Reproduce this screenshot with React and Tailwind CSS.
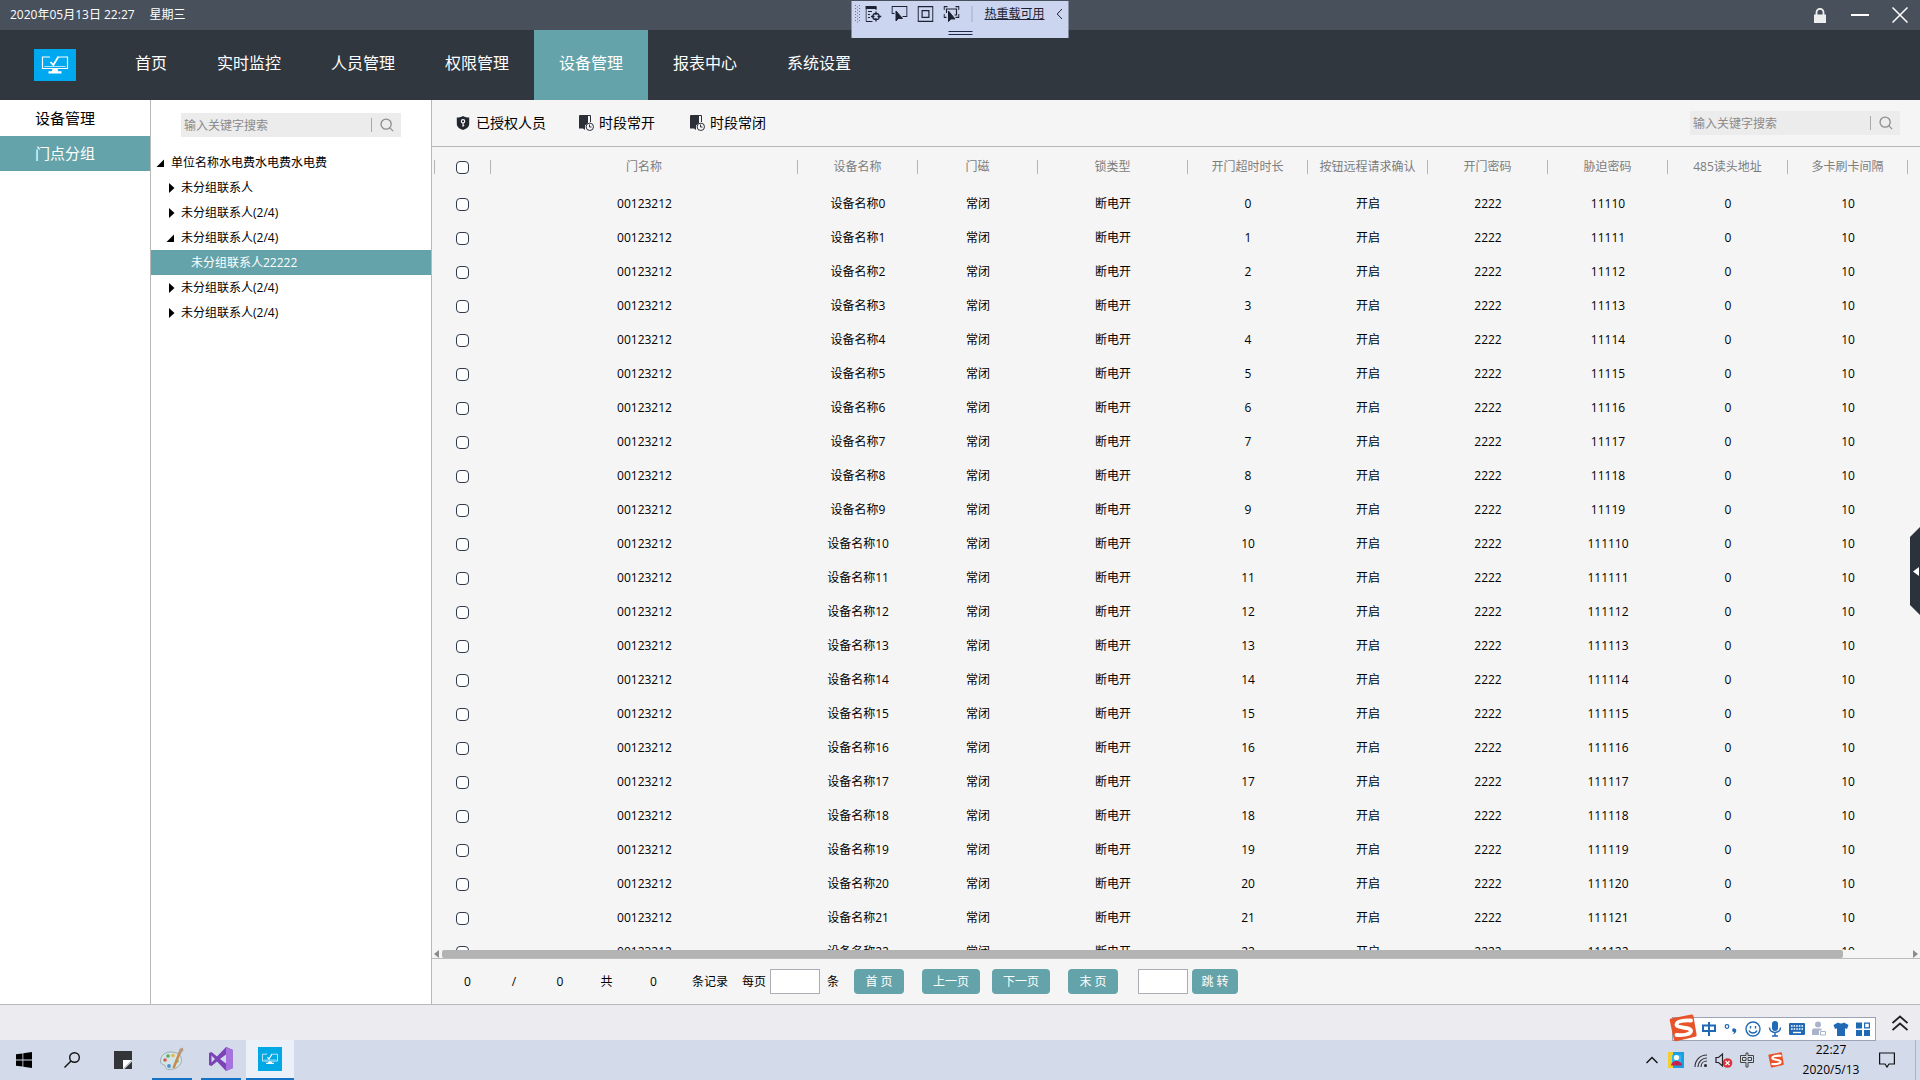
import { useState } from 'react';
import clsx from 'clsx';

const NAV = ['首页', '实时监控', '人员管理', '权限管理', '设备管理', '报表中心', '系统设置'];

const TREE = [
  { label: '单位名称水电费水电费水电费', level: 0, open: true },
  { label: '未分组联系人', level: 1 },
  { label: '未分组联系人(2/4)', level: 1 },
  { label: '未分组联系人(2/4)', level: 1, open: true },
  { label: '未分组联系人22222', level: 2 },
  { label: '未分组联系人(2/4)', level: 1 },
  { label: '未分组联系人(2/4)', level: 1 },
];

const COLUMNS = [
  { title: '门名称', width: '' },
  { title: '设备名称', width: 'w-[120px]' },
  { title: '门磁', width: 'w-[120px]' },
  { title: '锁类型', width: 'w-[150px]' },
  { title: '开门超时时长', width: 'w-[120px]' },
  { title: '按钮远程请求确认', width: 'w-[120px]' },
  { title: '开门密码', width: 'w-[120px]' },
  { title: '胁迫密码', width: 'w-[120px]' },
  { title: '485读头地址', width: 'w-[120px]' },
  { title: '多卡刷卡间隔', width: 'w-[120px]' },
];

const ROWS = Array.from({ length: 23 }, (_, i) => [
  '00123212', `设备名称${i}`, '常闭', '断电开', `${i}`, '开启', '2222', `1111${i}`, '0', '10',
]);

function MonitorIcon({ className }) {
  return (
    <svg viewBox="0 0 28 20" className={className} fill="none" stroke="#fff">
      <path d="M9 2H1.5v11.5h25V2H18" strokeWidth="1.2" />
      <path d="M3.5 11.5h21" strokeWidth="1" opacity=".7" />
      <path d="M9.5 7l2.800 3L17.500 1.500" strokeWidth="1.800" />
      <path d="M11.500 14h5l.8 2.200h3.200v2.300h-13v-2.300h3.200z" fill="#fff" stroke="none" />
    </svg>
  );
}

function SearchIcon({ className }) {
  return (
    <svg viewBox="0 0 16 16" className={className} fill="none" stroke="#8d8d8d" strokeWidth="1.500">
      <circle cx="7" cy="7" r="5.800" />
      <path d="M11 11l4 4" />
    </svg>
  );
}

function ShieldIcon() {
  return (
    <svg viewBox="0 0 14 14" className="size-3.5">
      <path d="M7 0c2 1.200 4 1.600 6.200 1.600V8c0 3-3 5-6.200 6C3.800 13 .8 11 .8 8V1.600C3 1.600 5 1.200 7 0z" fill="#23282f" />
      <circle cx="7" cy="5.300" r="1.700" fill="none" stroke="#fff" strokeWidth="1.100" />
      <path d="M7 7v3.800M7 9.300h1.300" stroke="#fff" strokeWidth="1.100" />
    </svg>
  );
}

function DoorClockIcon() {
  return (
    <svg viewBox="0 0 16 16" className="size-4">
      <path d="M1.500 13V.5h11V7" fill="none" stroke="#2b3038" />
      <path d="M1 1h9v7l-3 2.500V15l-2-1.500H1z" fill="#2b3038" />
      <circle cx="11.800" cy="11.800" r="3.700" fill="#f5f5f5" stroke="#2b3038" />
      <path d="M11.500 9.500V12h2" fill="none" stroke="#2b3038" />
    </svg>
  );
}

function SogouIcon({ className }) {
  return (
    <svg viewBox="0 0 28 28" className={className}>
      <path d="M2 4.500L22.500.5q1.500-.2 1.900 1.300l3.200 19q.2 1.700-1.400 2L7 27.300q-1.700.3-2.100-1.400L.7 6.300Q.4 4.900 2 4.500z" fill="#e8542a" />
      <path d="M22 6.500C16 6 7.500 7 7.500 10.500c0 4 14.500 2 14.500 6.500 0 3.500-8 4.500-14.500 4" fill="none" stroke="#fff" strokeWidth="3.800" strokeLinecap="round" />
    </svg>
  );
}

function SearchBox({ label, className }) {
  return (
    <div className={clsx('flex h-6 items-center bg-[#ececec]', className)}>
      <input
        type="text"
        aria-label={label}
        placeholder="输入关键字搜索"
        className="h-full min-w-0 flex-1 bg-transparent pl-[3px] text-xs outline-none placeholder:text-[#8a8a8a]"
      />
      <button aria-label="搜索" className="flex h-3.5 w-[30px] items-center justify-center border-l border-[#aaa]">
        <SearchIcon className="size-3.5" />
      </button>
    </div>
  );
}

function TitleBar() {
  return (
    <header className="flex h-[30px] shrink-0 items-center bg-[#48505b] pl-2.5 text-xs text-white">
      <span>2020年05月13日 22:27</span>
      <span className="ml-[15px]">星期三</span>
      <div className="ml-auto flex items-center">
        <button aria-label="锁定" className="flex w-10 justify-center">
          <svg viewBox="0 0 12 15" className="h-[15px] w-3">
            <path d="M2.500 7V4.300a3.500 3.500 0 017 0V7" fill="none" stroke="#eee" strokeWidth="1.800" />
            <path d="M0 6.500h12V15H0z" fill="#eee" />
          </svg>
        </button>
        <button aria-label="最小化" className="flex w-10 justify-center">
          <span className="h-0.5 w-[18px] bg-white" />
        </button>
        <button aria-label="关闭" className="flex w-10 justify-center">
          <svg viewBox="0 0 16 16" className="size-4" stroke="#fff" strokeWidth="1.500">
            <path d="M.5.5l15 15M15.500.5l-15 15" />
          </svg>
        </button>
      </div>
    </header>
  );
}

function DebugToolbar() {
  return (
    <div className="absolute top-px left-1/2 flex h-[37px] w-[217px] -translate-x-1/2 flex-col bg-[#ccd5f0] text-[#1c2233]">
      <div className="flex h-[26px] items-center pl-[3px]">
        <svg viewBox="0 0 6 18" className="mr-[5px] h-[18px] w-1.5">
          <path d="M1 0v18M5 0v18" stroke="#6b7594" strokeDasharray="1 2" />
          <path d="M3 1.500v16" stroke="#6b7594" strokeDasharray="1 2" />
        </svg>
        <button aria-label="实时可视化树" className="mr-2.5">
          <svg viewBox="0 0 16 16" className="size-4" fill="none" stroke="#1c2233">
            <path d="M.5 0v15.500H7" />
            <path d="M0 1.500h11" strokeWidth="3" />
            <path d="M10.500 1v3M2.500 5.500h4M2.500 8.500h2M2.500 11.500h2" />
            <circle cx="10.500" cy="10.500" r="3.200" strokeWidth="1.300" />
            <path d="M10.500 5.500v3.500M10.500 12v3.500M5.500 10.500H9M12 10.500h4" strokeWidth="1.300" />
          </svg>
        </button>
        <button aria-label="选择元素" className="mr-2.5">
          <svg viewBox="0 0 16 16" className="size-4" fill="none" stroke="#1c2233">
            <path d="M3 7.500H.5V.5h15v10H11" strokeWidth="1.200" />
            <path d="M4.500 5v10l2.500-2.600 4 .1z" fill="#1c2233" />
          </svg>
        </button>
        <button aria-label="显示布局" className="mr-2.5">
          <svg viewBox="0 0 16 16" className="size-4" fill="none" stroke="#1c2233" strokeWidth="1.200">
            <path d="M.6.600h14.800v14.800H.6zM4.600 4.600h6.800v6.800H4.600z" />
          </svg>
        </button>
        <button aria-label="跟踪焦点" className="mr-2.5">
          <svg viewBox="0 0 16 16" className="size-4" fill="none" stroke="#1c2233">
            <path d="M.6 4V.6H4M12 .6h3.400V4M15.400 8v3.400H12M.6 8v3.400H3M3 7V3h10v6h-2" strokeWidth="1.200" />
            <path d="M5 5v10.500l2.500-2.600 4 .1z" fill="#1c2233" />
          </svg>
        </button>
        <span className="mx-0.5 h-4 w-px bg-[#a3abc6]" />
        <a href="#reload" className="ml-2.5 text-xs underline">热重载可用</a>
        <button aria-label="折叠" className="ml-3">
          <svg viewBox="0 0 6 10" className="h-2.5 w-1.5" fill="none" stroke="#1c2233">
            <path d="M5.500 0L.7 5l4.800 5" />
          </svg>
        </button>
      </div>
      <div className="mx-auto mt-1 h-1 w-6 shrink-0 border-y border-[#1c2a4a]" />
    </div>
  );
}

function NavBar() {
  const [active, setActive] = useState(4);
  return (
    <nav className="flex h-[70px] shrink-0 bg-[#31373f] pl-[34px] text-base text-white">
      <div className="mt-[19px] mr-[34px] flex h-8 w-[42px] items-center justify-center bg-[#00a8ef]">
        <MonitorIcon className="h-5 w-7" />
      </div>
      {NAV.map((item, i) => (
        <button
          key={item}
          onClick={() => setActive(i)}
          className={clsx('px-[25px] pb-1', i === active && 'bg-[#65a3aa]')}
        >
          {item}
        </button>
      ))}
    </nav>
  );
}

function Tree() {
  const [selected, setSelected] = useState(4);
  return (
    <ul>
      {TREE.map((node, i) => (
        <li key={i}>
          <button
            onClick={() => setSelected(i)}
            className={clsx(
              'flex h-[25px] w-full items-center text-xs',
              node.level === 0 && 'pl-1.5',
              node.level === 1 && 'pl-4',
              node.level === 2 && 'pl-10',
              i === selected && 'bg-[#65a3aa] text-white',
            )}
          >
            {node.level < 2 && (
              <svg viewBox="0 0 8 10" className="mr-1.5 h-2.5 w-2 overflow-visible">
                <path d={node.open ? 'M7 1.500V9H-.5z' : 'M2 0l5.500 5L2 10z'} />
              </svg>
            )}
            {node.label}
          </button>
        </li>
      ))}
    </ul>
  );
}

const checkbox =
  'block size-[13px] mx-auto appearance-none rounded border border-[#2f3b4a] bg-white checked:bg-[#65a3aa]';

function DoorTable() {
  return (
    <div className="min-h-0 flex-1 overflow-hidden pr-3 pl-0.5">
      <table className="w-full table-fixed border-collapse text-center text-xs">
        <thead>
          <tr className="h-10 text-[#7d7d7d]">
            <th className="w-[57px] p-0 font-normal">
              <div className="flex h-3.5 items-center border-x border-[#b5b5b5]">
                <input type="checkbox" aria-label="全选" className={checkbox} />
              </div>
            </th>
            {COLUMNS.map((col) => (
              <th key={col.title} className={clsx('p-0 font-normal whitespace-nowrap', col.width)}>
                <div className="flex h-3.5 items-center justify-center border-r border-[#b5b5b5]">{col.title}</div>
              </th>
            ))}
          </tr>
        </thead>
        <tbody>
          {ROWS.map((row, i) => (
            <tr key={i} className="h-[34px]">
              <td className="p-0 pt-px">
                <input type="checkbox" aria-label={`选择${row[1]}`} className={checkbox} />
              </td>
              {row.map((cell, j) => (
                <td key={j} className="p-0">{cell}</td>
              ))}
            </tr>
          ))}
        </tbody>
      </table>
    </div>
  );
}

function ScrollBar() {
  return (
    <div className="flex h-[9px] shrink-0 items-center border-b border-[#b9bdbc] px-0.5">
      <svg viewBox="0 0 5 8" className="mr-[3px] h-2 w-[5px]"><path d="M5 0v8L0 4z" fill="#8c8c8c" /></svg>
      <div className="mr-[70px] h-2 flex-1 rounded-xs bg-[#b3b3b3]" />
      <svg viewBox="0 0 5 8" className="h-2 w-[5px]"><path d="M0 0v8l5-4z" fill="#8c8c8c" /></svg>
    </div>
  );
}

const pageButton = 'h-[25px] rounded-sm bg-[#65a3aa] text-white';
const pageInput = 'h-[25px] w-[50px] border border-[#abadb3] bg-white px-1 outline-none';

function Pager() {
  return (
    <footer className="flex h-[45px] shrink-0 items-center pl-3 text-xs">
      <span className="w-[47px] text-center">0</span>
      <span className="w-[46px] text-center">/</span>
      <span className="w-[46px] text-center">0</span>
      <span className="w-[47px] text-center">共</span>
      <span className="w-[47px] text-center">0</span>
      <span className="ml-[15px]">条记录</span>
      <label htmlFor="size" className="mr-1 ml-3.5">每页</label>
      <input id="size" type="text" className={pageInput} />
      <span className="mx-[7px]">条</span>
      <button className={clsx(pageButton, 'ml-2 w-[50px]')}>首 页</button>
      <button className={clsx(pageButton, 'ml-[18px] w-[58px]')}>上一页</button>
      <button className={clsx(pageButton, 'ml-3 w-[58px]')}>下一页</button>
      <button className={clsx(pageButton, 'ml-[18px] w-[50px]')}>末 页</button>
      <input type="text" aria-label="页码" className={clsx(pageInput, 'ml-5')} />
      <button className={clsx(pageButton, 'ml-1 w-[46px]')}>跳 转</button>
    </footer>
  );
}

function ImeBar() {
  return (
    <div className="absolute right-11 bottom-[39px] flex h-6 items-center border border-[#9ba3b5] bg-white pr-1 pl-6">
      <SogouIcon className="absolute -bottom-0.5 -left-1 size-7" />
      <div className="flex items-center gap-1.5 pl-1 text-[#1f69b5]">
        <svg viewBox="0 0 16 16" className="size-4" fill="none" stroke="currentColor" strokeWidth="2">
          <path d="M2 4.500h12v5.500H2zM8 1v14" />
        </svg>
        <svg viewBox="0 0 16 16" className="size-4" fill="none" stroke="currentColor">
          <circle cx="4" cy="5.500" r="1.800" strokeWidth="1.200" />
          <path d="M11.500 7.500a1.800 1.800 0 10-.5 3.500q0 1.200-1.500 2.500c2.500-.8 4-2.500 3.800-4.500a1.800 1.800 0 00-1.800-1.500z" fill="currentColor" stroke="none" />
        </svg>
        <svg viewBox="0 0 16 16" className="size-4" fill="none" stroke="currentColor" strokeWidth="1.400">
          <circle cx="8" cy="8" r="7" />
          <path d="M5.500 5v2.500M10.500 5v2.500M4 9.500c1.500 3.300 6.500 3.300 8 0" />
        </svg>
        <svg viewBox="0 0 16 16" className="size-4" fill="none" stroke="currentColor" strokeWidth="1.500">
          <rect x="5" y="0" width="6" height="10" rx="3" fill="currentColor" stroke="none" />
          <path d="M2.500 6.500c0 6.500 11 6.500 11 0M8 11.500v3.500M5 15h6" />
        </svg>
        <svg viewBox="0 0 16 16" className="size-4">
          <rect x="0" y="2" width="16" height="12" rx="1" fill="currentColor" />
          <path d="M2 5h12M2 8h12" stroke="#fff" strokeWidth="1.600" strokeDasharray="1.600 1" />
          <path d="M4 11.500h8" stroke="#fff" strokeWidth="1.400" />
        </svg>
        <svg viewBox="0 0 16 16" className="size-4" fill="#a9b4ca">
          <circle cx="7" cy="3.500" r="3" />
          <path d="M1 14V9.500q0-2 2-2h7.500v2H8V14z" />
          <path d="M9.500 10.500h5v3.500h-5z" fill="#fff" stroke="#a9b4ca" />
        </svg>
        <svg viewBox="0 0 16 16" className="size-4" fill="currentColor">
          <path d="M5 1.500q3 2 6 0L15.500 4 14 8l-2-.7V15H4V7.300L2 8 .5 4z" />
        </svg>
        <svg viewBox="0 0 16 16" className="size-4" fill="currentColor">
          <path d="M1 1.500h6v6H1zM1 9h6v6H1zM9 9h6v6H9z" />
          <path d="M9.600 2.100h4.800v4.800H9.600z" fill="#fff" stroke="currentColor" strokeWidth="1.200" />
        </svg>
      </div>
    </div>
  );
}

function TaskBar() {
  return (
    <div className="flex h-10 shrink-0 items-stretch bg-[#d3daea] text-xs text-black">
      <button aria-label="开始" className="flex w-12 items-center justify-center">
        <svg viewBox="0 0 16 16" className="size-4">
          <path d="M0 2.300l6.500-.9v6.200H0zM7.300 1.300L16 0v7.600H7.300zM0 8.400h6.500v6.200L0 13.700zM7.300 8.400H16V16l-8.700-1.300z" />
        </svg>
      </button>
      <button aria-label="搜索" className="flex w-12 items-center justify-center">
        <svg viewBox="0 0 16 16" className="size-4" fill="none" stroke="#111" strokeWidth="1.400">
          <circle cx="10.500" cy="5.500" r="4.800" />
          <path d="M7 9L.5 15.500" />
        </svg>
      </button>
      <button aria-label="便笺" className="flex w-[54px] items-center justify-center">
        <svg viewBox="0 0 18 18" className="size-[18px]">
          <path d="M0 0h18v9l-9 9H0z" fill="#333539" />
          <path d="M9 18V9h9z" fill="#fff" />
          <path d="M18 10.500V18h-7.500z" fill="#333539" />
        </svg>
      </button>
      <button aria-label="画图" className="ml-0.5 flex w-10 items-center justify-center border-b-2 border-[#1572c4]">
        <svg viewBox="0 0 24 24" className="size-6">
          <path d="M10 5C4 5 0 10 .5 15c.5 3 3.500 2 4.500 3.500s0 4 4 4c7 0 13-4 12.500-10S16 5 10 5z" fill="#d4e3e6" stroke="#8ba3a8" strokeWidth=".8" />
          <circle cx="5" cy="13" r="1.800" fill="#d95b50" />
          <circle cx="8" cy="9" r="1.800" fill="#5ba958" />
          <circle cx="13" cy="8.500" r="1.800" fill="#e5b94a" />
          <circle cx="9" cy="19" r="1.900" fill="#4d8fd1" />
          <circle cx="17" cy="14" r="1.800" fill="#79b77a" />
          <path d="M13.500 21L20 5" stroke="#c68b4d" strokeWidth="2.500" />
          <path d="M18.500 6l1-4 3-1.500 1 2.500-3 4z" fill="#b59a78" />
        </svg>
      </button>
      <button aria-label="Visual Studio" className="ml-[9px] flex w-10 items-center justify-center border-b-2 border-[#1572c4]">
        <svg viewBox="0 0 24 24" className="size-6">
          <path d="M0 6l2.500-1L8 9.500 17 0l7 3v18l-7 3-9-9.500L2.500 19 0 18z" fill="#7a43b6" />
          <path d="M17 0l7 3v18l-7 3z" fill="#a672dd" />
          <path d="M2.500 8.500v7L6 12zM17 7.500L11 12l6 4.500z" fill="#d3daea" />
        </svg>
      </button>
      <button aria-label="门禁管理" className="ml-[5px] flex w-12 items-center justify-center border-b-2 border-[#1572c4] bg-[#ecf0f8]">
        <span className="flex size-6 items-center justify-center bg-[#00a8e6]">
          <MonitorIcon className="h-3 w-[18px]" />
        </span>
      </button>

      <div className="ml-auto flex items-center">
        <svg viewBox="0 0 12 8" className="mr-2.5 h-2 w-3" fill="none" stroke="#111" strokeWidth="1.400">
          <path d="M.5 7L6 1.500 11.500 7" />
        </svg>
        <svg viewBox="0 0 16 16" className="mr-[9px] size-4">
          <path d="M0 0h16v16H0z" fill="#1a9fe0" />
          <path d="M0 0h5v16H0z" fill="#f2cf2e" />
          <path d="M4 3h9v9H4z" fill="#35b6ee" />
          <circle cx="8.500" cy="5.500" r="2.600" fill="#fff" />
          <path d="M3 13.500c.5-6 10.500-6 11 0z" fill="#c91f4d" />
        </svg>
        <svg viewBox="0 0 16 16" className="mr-1.5 size-4" fill="none" stroke="#333" strokeWidth="1.200">
          <path d="M2 15C2 8 7 3 14 3M5 15c0-5 4-9 9-9M8 15c0-3.500 2.500-6 6-6" />
          <circle cx="12.500" cy="13.500" r="1" fill="#333" />
        </svg>
        <svg viewBox="0 0 18 16" className="mr-1.5 h-4 w-[18px]">
          <path d="M1 5.500h2.500L7.500 2v12L3.500 10.500H1z" fill="none" stroke="#222" strokeWidth="1.200" />
          <circle cx="12.500" cy="11" r="4.800" fill="#d9343e" />
          <path d="M10.500 9l4 4M14.500 9l-4 4" stroke="#fff" strokeWidth="1.200" />
        </svg>
        <svg viewBox="0 0 16 16" className="mr-[13px] size-4" fill="none" stroke="#444">
          <path d="M1.500 3.500h5.500V1h2v2.500h5.500v7H9V15H7v-4.500H1.500zM3.500 5.500h3.500v3H3.500zM9 5.500h3.500v3H9z" />
        </svg>
        <SogouIcon className="size-4" />
        <div className="mr-[17px] ml-4 flex w-[62px] flex-col items-center leading-5">
          <span>22:27</span>
          <span>2020/5/13</span>
        </div>
        <button aria-label="通知" className="mr-5">
          <svg viewBox="0 0 16 16" className="size-4" fill="none" stroke="#111" strokeWidth="1.200">
            <path d="M.6 1h14.800v11H10l-2 3-2-3H.6z" />
          </svg>
        </button>
        <span className="mr-1 h-10 w-px bg-[#a9b3c8]" />
      </div>
    </div>
  );
}

export default function App() {
  return (
    <div className="relative flex h-screen flex-col overflow-hidden bg-[#ecebef] font-['Open_Sans','Noto_Sans_CJK_SC',sans-serif] text-black">
      <TitleBar />
      <NavBar />
      <DebugToolbar />

      <div className="flex min-h-0 flex-1 border-b border-[#b5bab9]">
        <aside className="w-[151px] shrink-0 border-r border-[#b5bab9] bg-white text-[15px]">
          <button className="block h-9 w-full pl-[35px] text-left">设备管理</button>
          <button className="block h-[35px] w-full bg-[#65a3aa] pl-[35px] text-left text-white">门点分组</button>
        </aside>

        <section className="w-[281px] shrink-0 border-r border-[#b5bab9] bg-white">
          <SearchBox label="搜索分组" className="mx-[30px] mt-[13px] mb-[13px]" />
          <Tree />
        </section>

        <main className="relative flex min-w-0 flex-1 flex-col bg-[#f5f5f5]">
          <div className="flex h-[47px] shrink-0 items-center border-b border-[#b5bab9] pr-5 pl-6 text-sm">
            <button className="mr-8 flex items-center gap-1.5"><ShieldIcon />已授权人员</button>
            <button className="mr-[34px] flex items-center gap-[5px]"><DoorClockIcon />时段常开</button>
            <button className="flex items-center gap-[5px]"><DoorClockIcon />时段常闭</button>
            <SearchBox label="搜索门点" className="ml-auto w-[210px]" />
          </div>
          <DoorTable />
          <ScrollBar />
          <Pager />
          <button aria-label="展开面板" className="absolute top-[427px] right-0">
            <svg viewBox="0 0 10 88" className="h-[88px] w-2.5">
              <path d="M10 0v88L0 78V10z" fill="#2c323b" />
              <path d="M9 40v9l-6-4.500z" fill="#fff" />
            </svg>
          </button>
        </main>
      </div>

      <div className="flex h-[35px] shrink-0 items-center justify-end pr-3">
        <button aria-label="展开">
          <svg viewBox="0 0 16 16" className="size-4" fill="none" stroke="#222" strokeWidth="1.800">
            <path d="M.5 8L8 1.500 15.500 8M.5 15L8 8.500l7.500 6.500" />
          </svg>
        </button>
      </div>
      <ImeBar />
      <TaskBar />
    </div>
  );
}
